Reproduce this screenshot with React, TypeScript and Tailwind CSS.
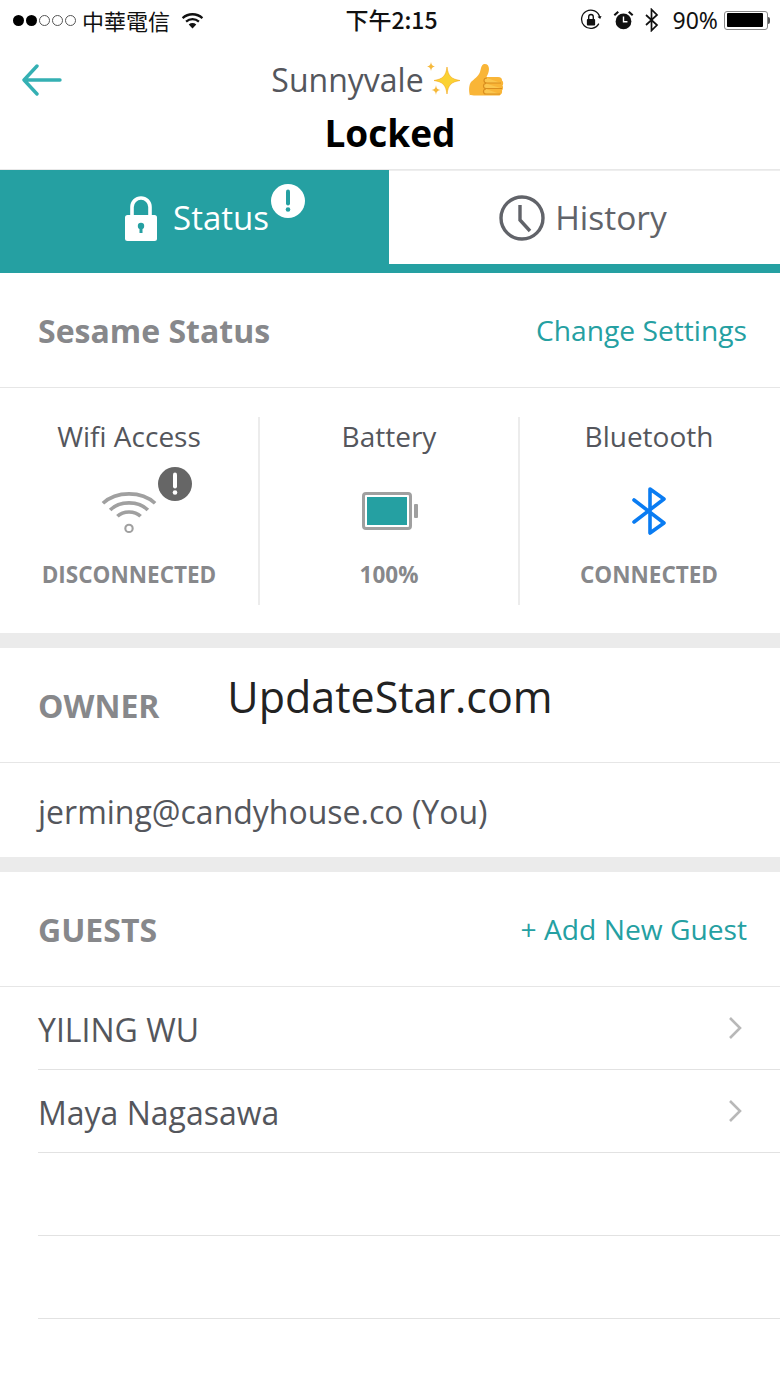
import React from "react";

const teal = "#25a0a2";

const InfoIcon = ({ bg, fg, className }: { bg: string; fg: string; className: string }) => (
  <svg viewBox="0 0 34 34" className={className}>
    <circle cx="17" cy="17" r="17" fill={bg} />
    <path d="M17 7.5v12" stroke={fg} strokeWidth="4" strokeLinecap="round" />
    <circle cx="17" cy="25.5" r="2.3" fill={fg} />
  </svg>
);

const StatusBar = () => (
  <div className="relative flex h-[40px] items-center justify-between pl-[13px] pr-[10px] text-[#111]">
    <div className="flex items-center">
      <div className="flex items-center gap-[2px]">
        <span className="h-[11px] w-[11px] rounded-full bg-black" />
        <span className="h-[11px] w-[11px] rounded-full bg-black" />
        <span className="h-[11px] w-[11px] rounded-full border border-[#555]" />
        <span className="h-[11px] w-[11px] rounded-full border border-[#555]" />
        <span className="h-[11px] w-[11px] rounded-full border border-[#555]" />
      </div>
      <span className="ml-[6px] text-[22px] leading-none font-['Noto_Sans_CJK_TC',sans-serif]">中華電信</span>
      <svg viewBox="0 0 24 18" className="ml-[11px] h-[17px] w-[23px]">
        <path d="M1.5 6.5C7.5 1 16.5 1 22.5 6.5" fill="none" stroke="#111" strokeWidth="2.4" />
        <path d="M5.2 10.2C9.2 6.6 14.8 6.6 18.8 10.2" fill="none" stroke="#111" strokeWidth="2.4" />
        <path d="M8 13.2c2.4-1.9 5.6-1.9 8 0L12 17.5z" fill="#111" />
      </svg>
    </div>
    <span className="absolute left-0 right-0 top-[8px] pl-[3px] text-center text-[23px] leading-none font-medium font-['Noto_Sans_CJK_TC',sans-serif]">下午2:15</span>
    <div className="flex items-center">
      <svg viewBox="0 0 24 24" className="h-[22px] w-[22px]">
        <path d="M20.5 16A10 10 0 1 1 21.5 9" fill="none" stroke="#111" strokeWidth="1.4" />
        <path d="M19 8.5l3 2.5 1.500-3.500z" fill="#111" />
        <rect x="7.5" y="11" width="9" height="7" rx="1" fill="#111" />
        <path d="M9.500 11V8.500a2.500 2.500 0 0 1 5 0V11" fill="none" stroke="#111" strokeWidth="1.5" />
      </svg>
      <svg viewBox="0 0 24 24" className="ml-[11px] h-[21px] w-[21px]">
        <circle cx="12" cy="13" r="9" fill="#111" />
        <path d="M12 7.500V13.500H16.500" fill="none" stroke="#fff" strokeWidth="1.6" />
        <path d="M1.500 6L6 2M22.500 6L18 2" stroke="#111" strokeWidth="2.4" />
      </svg>
      <svg viewBox="0 0 16 24" className="ml-[10px] h-[24px] w-[16px]">
        <path d="M2 7l11 10-5.500 5.500v-21L13 7 2 17" fill="none" stroke="#111" strokeWidth="1.7" />
      </svg>
      <span className="ml-[13px] text-[23px] leading-none font-['Noto_Sans',sans-serif]">90%</span>
      <div className="ml-[6px] flex items-center">
        <div className="h-[19px] w-[44px] rounded-[3px] border border-[#888] bg-white p-[1.5px]">
          <div className="h-full w-[36px] rounded-[1px] bg-black" />
        </div>
        <div className="h-[7px] w-[2px] rounded-r-sm bg-[#555]" />
      </div>
    </div>
  </div>
);

const Header = () => (
  <div className="relative h-[130px] border-b border-[#e8e8e8] pt-[18px] text-center">
    <svg viewBox="0 0 40 32" className="absolute left-[22px] top-[24px] h-[32px] w-[40px]">
      <path d="M15 2L2 16l13 14M2 16h36" fill="none" stroke="#34b0b3" strokeWidth="3.400" strokeLinecap="round" strokeLinejoin="round" />
    </svg>
    <div className="flex h-[44px] items-center justify-center pr-[5px] text-[32px] leading-none text-[#54565c]">
      <span>Sunnyvale</span>
      <svg viewBox="0 0 36 36" className="ml-[2px] h-[36px] w-[36px] shrink-0">
        <path d="M21 5c1.200 9 4 12 13 13.500-9 1.500-11.800 4.500-13 13.500-1.200-9-4-12-13-13.500 9-1.500 11.800-4.500 13-13.500z" fill="#fbd233" stroke="#f3a71f" strokeWidth=".6" />
        <path d="M5 0c.5 3 1.500 4 4 4.500-2.500.5-3.500 1.500-4 4.500-.5-3-1.500-4-4-4.500 2.500-.5 3.500-1.500 4-4.500z" fill="#f6b93b" />
        <path d="M10 23c.5 3.500 1.500 4.500 4.500 5-3 .5-4 1.500-4.500 5-.5-3.500-1.500-4.500-4.500-5 3-.5 4-1.500 4.500-5z" fill="#f6b93b" />
      </svg>
      <svg viewBox="0 0 36 36" className="ml-[6px] mt-[2px] h-[36px] w-[36px] shrink-0">
        <path d="M2 33c-1.500-6-1-11 1-14 3-3 7-5 9-10 1-3 1-7 4-8 3-.5 5 1.500 5 5 0 3-1.500 6-2.500 8H30c3 0 4 1.500 4 3.500 1.500 1 1.500 4 .5 5 1 1.500.5 4-.5 5 .5 2-.5 4-2.500 5H8c-3 0-5-.5-6-.5z" fill="#f9b537" />
        <path d="M19 15c-2 0-3 1-3 2.500S17 20 19 20h14M18 20.500c-1.500 0-2.500 1-2.500 2.500s1 2.500 2.500 2.500h16M18 26c-1.500 0-2.500 1-2.500 2.500S16.500 31 18 31h14" fill="#fbc64e" stroke="#d98e1f" strokeWidth="1.200" />
      </svg>
    </div>
    <div className="mt-[8px] text-[37px] leading-[46px] font-bold text-black">Locked</div>
  </div>
);

const Tabs = () => (
  <div className="flex h-[103px] border-b-[9px] border-[#25a0a2]">
    <div className="flex h-[103px] w-[389px] items-center justify-center bg-[#25a0a2] pb-[7px] pl-[40px] text-white">
      <svg viewBox="0 0 34 46" className="h-[46px] w-[34px]">
        <path d="M8 22V12a9 9 0 0 1 18 0v10" fill="none" stroke="#fff" strokeWidth="3.600" />
        <rect x="1" y="20" width="32" height="26" rx="2.500" fill="#fff" />
        <circle cx="17" cy="31" r="3.200" fill={teal} />
        <rect x="15.500" y="32" width="3" height="6" fill={teal} />
      </svg>
      <span className="ml-[15px] mt-[-1px] text-[33px] leading-none">Status</span>
      <InfoIcon bg="#fff" fg={teal} className="mb-[35px] ml-[2px] h-[34px] w-[34px]" />
    </div>
    <div className="flex flex-1 items-center justify-center border-t border-[#eee] pr-[3px] text-[#616369]">
      <svg viewBox="0 0 46 46" className="mr-[10px] h-[46px] w-[46px]">
        <circle cx="23" cy="23" r="21" fill="none" stroke="#616369" strokeWidth="3.400" />
        <path d="M21 10v15l10 11" fill="none" stroke="#616369" strokeWidth="3.400" />
      </svg>
      <span className="text-[33.500px] leading-none">History</span>
    </div>
  </div>
);

const SectionHead = ({ title, action }: { title: string; action?: string }) => (
  <div className="flex h-[115px] items-center justify-between border-b border-[#e6e6e6] pl-[38px] pr-[33px]">
    <span className="mt-[2px] text-[32px] font-bold text-[#87888b]">{title}</span>
    {action && <span className="text-[28.2px] text-[#25a0a2]">{action}</span>}
  </div>
);

const Band = () => <div className="h-[15px] bg-[#ebebeb]" />;

const StatusCell = ({ label, value, children, divider }: { label: string; value: string; children: React.ReactNode; divider?: boolean }) => (
  <div className={`flex h-[188px] flex-1 flex-col items-center ${divider ? "border-r-2 border-[#ececec]" : "pr-[2px]"}`}>
    <span className="text-[28px] leading-[38px] text-[#54565c]">{label}</span>
    <div className="flex h-[105px] w-full items-center justify-center pt-[7px]">{children}</div>
    <span className="text-[22.5px] leading-[30px] font-bold text-[#87888b]">{value}</span>
  </div>
);

const StatusRow = () => (
  <div className="flex h-[245px] pt-[29px]">
    <StatusCell label="Wifi Access" value="DISCONNECTED" divider>
      <div className="relative h-[46px] w-[56px]">
        <svg viewBox="0 0 58 46" className="h-[46px] w-[56px]">
          <path d="M2 15C16 2 42 2 56 15" fill="none" stroke="#a0a0a0" strokeWidth="3.800" />
          <path d="M9.500 22C19 12 39 12 48.500 22" fill="none" stroke="#a0a0a0" strokeWidth="3.800" />
          <path d="M17 28.500C23 22.500 35 22.500 41 28.500" fill="none" stroke="#a0a0a0" strokeWidth="3.800" />
          <circle cx="29" cy="41" r="3.800" fill="none" stroke="#a0a0a0" strokeWidth="2.200" />
        </svg>
        <InfoIcon bg="#666" fg="#fff" className="absolute -right-[35px] -top-[21px] h-[34px] w-[34px]" />
      </div>
    </StatusCell>
    <StatusCell label="Battery" value="100%" divider>
      <div className="ml-[2px] flex items-center">
        <div className="h-[38px] w-[50px] rounded-[4px] border-[3px] border-[#a0a0a0] bg-white p-[2px]">
          <div className="h-full w-full bg-[#25a0a2]" />
        </div>
        <div className="ml-[2px] h-[14px] w-[4px] rounded-[1px] bg-[#a0a0a0]" />
      </div>
    </StatusCell>
    <StatusCell label="Bluetooth" value="CONNECTED">
      <svg viewBox="0 0 36 48" className="h-[48px] w-[36px]">
        <path d="M3 13l30 23-14 10V2l14 10L3 35" fill="none" stroke="#0a7cf2" strokeWidth="3.600" strokeLinecap="round" strokeLinejoin="round" />
      </svg>
    </StatusCell>
  </div>
);

const GuestRow = ({ name }: { name?: string }) => (
  <div className="ml-[38px] flex h-[83px] items-center justify-between border-b border-[#e2e2e2] pr-[38px] text-[32px] text-[#54565c]">
    <span className="mt-[3px]">{name}</span>
    {name && (
      <svg viewBox="0 0 14 24" className="h-[24px] w-[14px]">
        <path d="M2 2l10 10L2 22" fill="none" stroke="#b8b8b8" strokeWidth="2.600" />
      </svg>
    )}
  </div>
);

export default function App() {
  return (
    <div className="h-[1387px] w-[780px] overflow-hidden bg-white font-['Open_Sans',sans-serif]">
      <StatusBar />
      <Header />
      <Tabs />
      <SectionHead title="Sesame Status" action="Change Settings" />
      <StatusRow />
      <Band />
      <div className="relative">
        <SectionHead title="OWNER" />
        <span className="absolute left-0 right-0 top-[19px] text-center text-[43px] leading-[60px] text-[#222]">UpdateStar.com</span>
      </div>
      <div className="flex h-[94px] items-center pl-[38px] pt-[3px] text-[32px] text-[#54565c]">jerming@candyhouse.co (You)</div>
      <Band />
      <SectionHead title="GUESTS" action="+ Add New Guest" />
      <GuestRow name="YILING WU" />
      <GuestRow name="Maya Nagasawa" />
      <GuestRow />
      <GuestRow />
    </div>
  );
}
